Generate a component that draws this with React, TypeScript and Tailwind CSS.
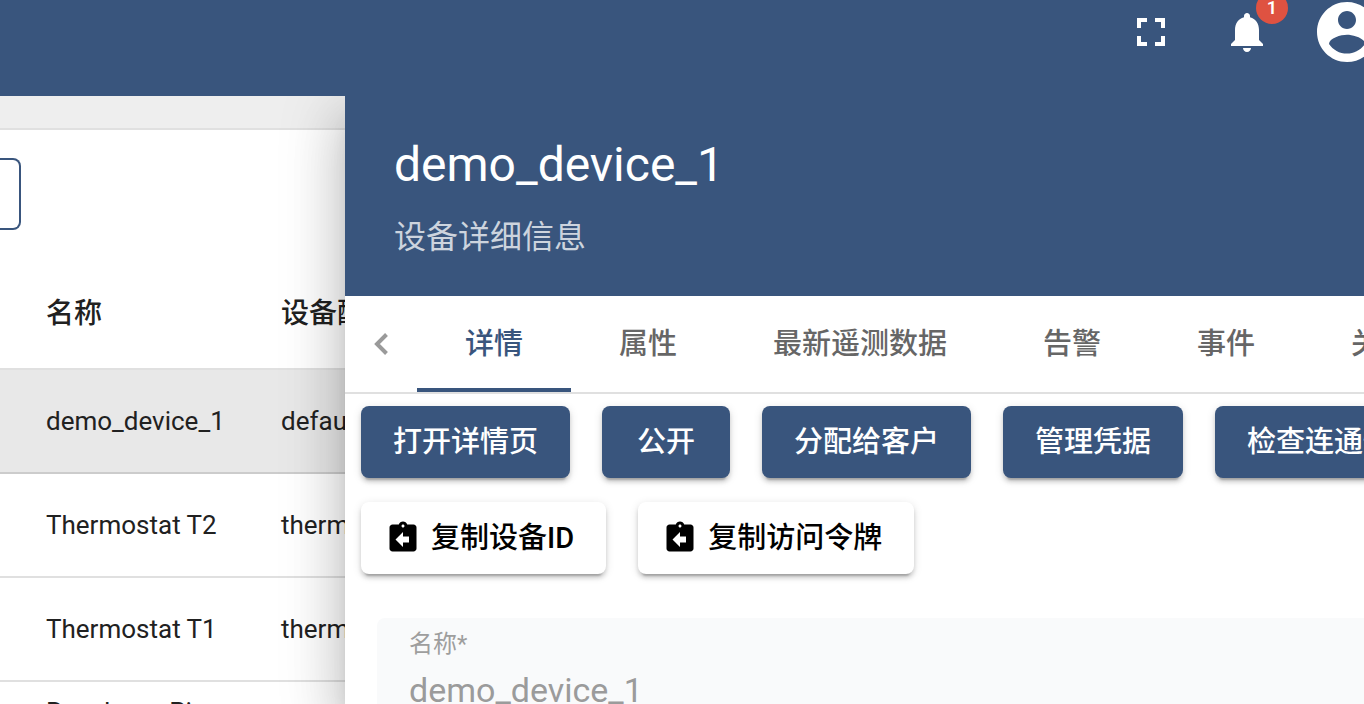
import React from "react";

const PRIMARY_BUTTON =
  "flex h-[72px] min-w-32 shrink-0 items-center justify-center whitespace-nowrap rounded-lg bg-[#39557d] px-8 text-[29px] font-medium leading-none text-white shadow-[0_6px_2px_-4px_rgba(0,0,0,0.2),0_4px_4px_0_rgba(0,0,0,0.14),0_2px_10px_0_rgba(0,0,0,0.12)]";

const COPY_BUTTON =
  "flex h-[72px] shrink-0 items-center gap-2.5 whitespace-nowrap rounded-lg bg-white pl-6 pr-8 text-[29px] font-medium leading-none text-black shadow-[0_6px_2px_-4px_rgba(0,0,0,0.2),0_4px_4px_0_rgba(0,0,0,0.14),0_2px_10px_0_rgba(0,0,0,0.12)]";

function Icon({ d, className }: { d: string; className: string }) {
  return (
    <svg viewBox="0 0 24 24" fill="currentColor" aria-hidden="true" className={className}>
      <path d={d} />
    </svg>
  );
}

const ICONS = {
  fullscreen: "M7 14H5v5h5v-2H7v-3zm-2-4h2V7h3V5H5v5zm12 7h-3v2h5v-5h-2v3zM14 5v2h3v3h2V5h-5z",
  bell: "M12 22c1.1 0 2-.9 2-2h-4c0 1.1.89 2 2 2zm6-6v-5c0-3.07-1.64-5.64-4.5-6.32V4c0-.83-.67-1.5-1.5-1.5s-1.5.67-1.5 1.5v.68C7.63 5.36 6 7.92 6 11v5l-2 2v1h16v-1l-2-2z",
  account:
    "M12 2C6.48 2 2 6.48 2 12s4.48 10 10 10 10-4.48 10-10S17.52 2 12 2zm0 3c1.66 0 3 1.34 3 3s-1.34 3-3 3-3-1.34-3-3 1.34-3 3-3zm0 14.2c-2.5 0-4.71-1.28-6-3.22.03-1.99 4-3.08 6-3.08 1.99 0 5.97 1.09 6 3.08-1.29 1.94-3.5 3.22-6 3.22z",
  copy: "M19 3h-4.18C14.4 1.84 13.3 1 12 1c-1.3 0-2.4.84-2.82 2H5c-1.1 0-2 .9-2 2v14c0 1.1.9 2 2 2h14c1.1 0 2-.9 2-2V5c0-1.1-.9-2-2-2zm-7 0c.55 0 1 .45 1 1s-.45 1-1 1-1-.45-1-1 .45-1 1-1zm4 12h-4v3l-5-5 5-5v3h4v4z",
};

const TABS = ["详情", "属性", "最新遥测数据", "告警", "事件", "关联"];
const ACTIONS = ["打开详情页", "公开", "分配给客户", "管理凭据", "检查连通性"];
const COPY_ACTIONS = ["复制设备ID", "复制访问令牌"];

const DEVICES = [
  { name: "demo_device_1", profile: "default" },
  { name: "Thermostat T2", profile: "thermostat" },
  { name: "Thermostat T1", profile: "thermostat" },
  { name: "Raspberry Pi Demo Device", profile: "default" },
];

function TopBar() {
  return (
    <header className="relative z-20 flex h-24 shrink-0 items-center justify-end bg-[#39557d] pb-8 text-white">
      <button type="button" aria-label="全屏" className="flex h-12 w-24 items-center justify-center">
        <Icon d={ICONS.fullscreen} className="size-12" />
      </button>
      <button type="button" aria-label="通知" className="relative flex h-12 w-24 items-center justify-center">
        <Icon d={ICONS.bell} className="size-12" />
        <span className="absolute -top-4 left-[57px] flex size-8 items-center justify-center rounded-full bg-[#df5241] text-lg font-semibold leading-none">
          1
        </span>
      </button>
      <button type="button" aria-label="账户" className="-mr-[19px] ml-4 shrink-0">
        <Icon d={ICONS.account} className="size-[72px]" />
      </button>
    </header>
  );
}

function DeviceList() {
  return (
    <section className="w-[345px] shrink-0 overflow-hidden bg-white text-[#212121]">
      <div className="h-[34px] border-b-2 border-[#e0e0e0] bg-[#eeeeee]" />
      <div className="h-[126px] pt-7">
        <button
          type="button"
          aria-label="设备筛选"
          className="block h-[72px] w-[21px] rounded-r-lg border-2 border-l-0 border-[#39557d]"
        />
      </div>
      <table className="w-[640px] table-fixed border-collapse text-left text-[26px] leading-[42px]">
        <thead>
          <tr className="h-[113px] border-b-2 border-[#e0e0e0] text-[28px]">
            <th scope="col" className="w-[281px] pb-0 pl-[46px] pr-8 pt-1 font-medium">
              名称
            </th>
            <th scope="col" className="px-0 pb-0 pt-1 font-medium">
              设备配置
            </th>
          </tr>
        </thead>
        <tbody>
          {DEVICES.map((device, i) => (
            <tr
              key={device.name}
              className={
                i === 0
                  ? "h-[104px] border-b-2 border-[#cccccc] bg-[#e8e8e8]"
                  : "h-[104px] border-b-2 border-[#e0e0e0]"
              }
            >
              <td className="py-0 pl-[46px] pr-8">{device.name}</td>
              <td className="p-0">{device.profile}</td>
            </tr>
          ))}
        </tbody>
      </table>
    </section>
  );
}

function DetailsPanel() {
  return (
    <section className="relative z-10 flex min-w-0 flex-1 flex-col overflow-hidden bg-white shadow-[0_16px_20px_-10px_rgba(0,0,0,0.2),0_32px_48px_4px_rgba(0,0,0,0.14),0_12px_60px_10px_rgba(0,0,0,0.12)]">
      <div className="flex h-[200px] shrink-0 flex-col justify-center gap-3 bg-[#39557d] px-[49px] pt-2.5 text-white">
        <h1 className="text-5xl leading-[60px]">demo_device_1</h1>
        <p className="text-[32px] leading-[60px] text-white/75">设备详细信息</p>
      </div>

      <div className="flex h-[98px] shrink-0 border-b-2 border-[#e0e0e0]">
        <button
          type="button"
          aria-label="上一组标签"
          className="flex w-[72px] shrink-0 items-center justify-center text-[#9a9a9a]"
        >
          <svg viewBox="0 0 16 24" fill="none" stroke="currentColor" strokeWidth="4" className="h-6 w-4" aria-hidden="true">
            <path d="M13.5 2.5 4 12l9.5 9.5" />
          </svg>
        </button>
        <div role="tablist" className="flex">
          {TABS.map((tab, i) => (
            <button
              key={tab}
              type="button"
              role="tab"
              aria-selected={i === 0}
              className={
                i === 0
                  ? "shrink-0 whitespace-nowrap border-y-4 border-t-transparent border-b-[#39557d] px-12 text-[29px] font-medium leading-none text-[#39557d]"
                  : "shrink-0 whitespace-nowrap border-y-4 border-transparent px-12 text-[29px] font-medium leading-none text-[#666666]"
              }
            >
              {tab}
            </button>
          ))}
        </div>
      </div>

      <div className="flex flex-col gap-6 px-4 pt-3">
        <div className="flex gap-8">
          {ACTIONS.map((label) => (
            <button key={label} type="button" className={PRIMARY_BUTTON}>
              {label}
            </button>
          ))}
        </div>
        <div className="flex gap-8">
          {COPY_ACTIONS.map((label) => (
            <button key={label} type="button" className={COPY_BUTTON}>
              <Icon d={ICONS.copy} className="size-9" />
              {label}
            </button>
          ))}
        </div>
      </div>

      <form className="mt-11 pl-8">
        <div className="flex h-28 flex-col rounded-tl-lg bg-[#f9fafb] px-8 pt-2">
          <label htmlFor="device-name" className="text-2xl leading-9 text-[#9e9e9e]">
            名称*
          </label>
          <input
            id="device-name"
            type="text"
            disabled
            defaultValue="demo_device_1"
            className="h-14 w-full bg-transparent text-[34px] text-[#9b9b9b] outline-none"
          />
        </div>
      </form>
    </section>
  );
}

export default function App() {
  return (
    <div className="flex h-screen flex-col overflow-hidden bg-white font-[Roboto,'Noto_Sans_CJK_SC',sans-serif]">
      <TopBar />
      <main className="flex min-h-0 flex-1">
        <DeviceList />
        <DetailsPanel />
      </main>
    </div>
  );
}
